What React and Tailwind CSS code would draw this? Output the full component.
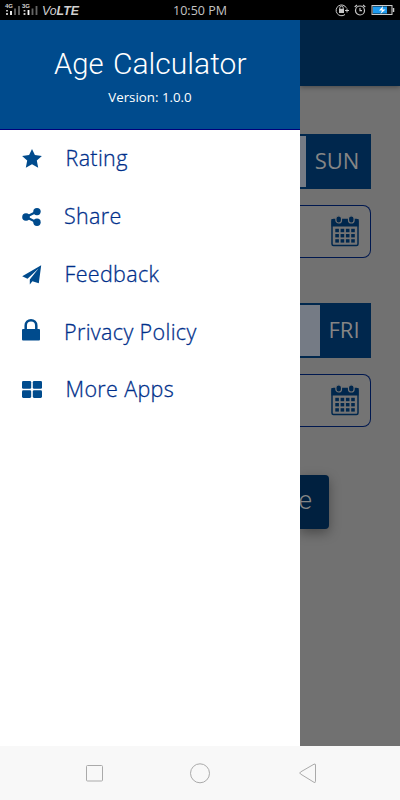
import React from 'react';

const StarIcon = () => (
  <svg width="20" height="19" viewBox="0 0 20 19" fill="#004b8d">
    <path d="M10 0 12.900 6l7 .9-5.100 4.600L16.200 18.700l-6.200-3.400-6.200 3.400 1.400-7.200L.1 6.900 7.100 6Z" />
  </svg>
);

const ShareIcon = () => (
  <svg width="20" height="20" viewBox="0 0 20 20" fill="#004b8d">
    <path d="M15 4.500 4 10l11 5.500" fill="none" stroke="#004b8d" strokeWidth="2.200" />
    <circle cx="4" cy="10" r="3.800" />
    <circle cx="15" cy="4.600" r="3.700" />
    <circle cx="15" cy="15.300" r="3.700" />
  </svg>
);

const PlaneIcon = () => (
  <svg className="relative top-px" width="20" height="20" viewBox="0 0 20 20" fill="#004b8d">
    <path d="M19.200.3.2 11.200l5.300 2.600L16.500 3.500 7.800 14.500v5l2.600-3.300 6.400 2Z" />
  </svg>
);

const LockIcon = () => (
  <svg className="relative -top-[2px]" width="20" height="24" viewBox="0 0 20 24" fill="none">
    <path d="M3.700 12V7.500a5.300 5.300 0 0 1 10.600 0V12" stroke="#004b8d" strokeWidth="2.500" />
    <rect x="0" y="11" width="18" height="11.500" rx="1" fill="#004b8d" />
  </svg>
);

const GridIcon = () => (
  <svg width="20" height="17" viewBox="0 0 20 17" fill="#004b8d">
    <rect x="0" y="0" width="9.2" height="7.7" rx="1.3" />
    <rect x="10.8" y="0" width="9.2" height="7.7" rx="1.3" />
    <rect x="0" y="9.2" width="9.2" height="7.7" rx="1.3" />
    <rect x="10.8" y="9.2" width="9.2" height="7.7" rx="1.3" />
  </svg>
);

const CalendarIcon = () => (
  <svg width="28" height="32" viewBox="0 0 28 32" fill="none">
    <rect x="1" y="4.5" width="26" height="26" rx="1.5" stroke="#00274d" strokeWidth="1.5" />
    <path d="M.5 4h27v7.500H.5z" fill="#00274d" />
    {[7.7, 20.3].map((x) => (
      <rect key={x} x={x - 2.8} y="0.8" width="5.6" height="7.2" rx="2.8" fill="#00274d" stroke="#747474" strokeWidth="1.2" />
    ))}
    {[13.8, 19, 24.2].map((y) =>
      [4.3, 9.6, 14.9, 20.2].map((x) => (
        <rect key={`${x}-${y}`} x={x} y={y} width="3.6" height="3.4" fill="#00274d" />
      ))
    )}
  </svg>
);

const menuItems = [
  { label: 'Rating', icon: <StarIcon />, offset: 'pl-[1.5px]' },
  { label: 'Share', icon: <ShareIcon />, offset: 'pl-0' },
  { label: 'Feedback', icon: <PlaneIcon />, offset: 'pl-[0.5px]' },
  { label: 'Privacy Policy', icon: <LockIcon />, offset: 'pl-0' },
  { label: 'More Apps', icon: <GridIcon />, offset: 'pl-[1.5px]' },
];

const StatusBar = () => (
  <div className="flex h-5 shrink-0 items-center justify-between bg-black pl-1 pr-[5px]">
    <div className="flex w-[150px] items-center">
      <svg className="shrink-0" width="38" height="16" viewBox="0 0 38 16">
        <g fill="#d6d6d6" fontFamily="Liberation Sans, sans-serif" fontSize="6" fontWeight="bold">
          <text x="1" y="6">4G</text>
          <text x="18" y="6">3G</text>
        </g>
        <path d="M3 8v1.500M3 11v2M20.500 8v1.500M20.500 11v2" stroke="#ccc" strokeWidth="1.8" />
        <path d="M7 9v4M24.500 8v5" stroke="#fff" strokeWidth="1.8" />
        <path d="M11 6.500V13M15 4V13M28.500 6.500V13M32.500 4V13" stroke="#666" strokeWidth="1.8" />
      </svg>
      <span className="pt-px font-['Liberation_Sans',sans-serif] text-[12.3px] italic leading-4 text-[#d0d0d0]">
        Vo<b>LTE</b>
      </span>
    </div>
    <svg width="56" height="18" viewBox="0 0 56 18">
      <text x="1" y="14" textLength="54" lengthAdjust="spacing" fill="#c4c4c4" fontFamily="Open Sans, sans-serif" fontSize="12.5">10:50 PM</text>
    </svg>
    <div className="flex w-[150px] items-center justify-end gap-[5px]">
      <svg width="14" height="14" viewBox="0 0 14 14" fill="none" stroke="#c8c8c8">
        <path d="M11.300 4.800A5.4 5.4 0 1 0 10 11.500M10 7.500h4M12 5.500v4" />
        <path d="M4.800 6V4.800a1.700 1.700 0 0 1 3.400 0V6" />
        <rect x="4" y="5.800" width="5" height="4.200" fill="#c8c8c8" stroke="none" />
      </svg>
      <svg width="12" height="14" viewBox="0 0 12 14" fill="none" stroke="#c8c8c8" strokeWidth="1.2">
        <circle cx="6" cy="7.500" r="4.500" />
        <path d="M6 5v2.700h2M.7 4 3 2M11.300 4 9 2" />
      </svg>
      <svg width="24" height="12" viewBox="0 0 24 12">
        <rect x="1" y="1.5" width="20" height="9" fill="#111" stroke="#ccc" />
        <rect x="2" y="2.5" width="14" height="7" fill="#1e9bf0" />
        <path d="M22.5 4v4" stroke="#ccc" strokeWidth="1.5" />
        <path d="M12 2 8 6.5h3L9.5 10 14.5 5.5h-3z" fill="#fff" />
      </svg>
    </div>
  </div>
);

const Drawer = () => (
  <aside className="flex w-[300px] shrink-0 flex-col bg-white">
    <header className="flex h-[110px] flex-col items-center border-b border-[#00007b] bg-[#004b8d] text-white">
      <svg className="mt-[23px]" width="200" height="42" viewBox="0 0 200 42" fill="#fff">
        <g fontFamily="Roboto, sans-serif" fontSize="29.5" fontWeight="300">
          <text x="4" y="31" textLength="49.5" lengthAdjust="spacingAndGlyphs">Age</text>
          <text x="63" y="31" textLength="133.5" lengthAdjust="spacingAndGlyphs">Calculator</text>
        </g>
      </svg>
      <p className="mt-[3px] font-['Open_Sans',sans-serif] text-[13.3px] leading-[18px]">Version: 1.0.0</p>
    </header>
    <nav className="flex flex-col">
      {menuItems.map(({ label, icon, offset }) => (
        <div key={label} className="flex h-[57.75px] items-center pl-[22px]">
          <div className="flex w-[42px] shrink-0 items-center">{icon}</div>
          <span className={`whitespace-nowrap pb-px font-['Open_Sans',sans-serif] text-[21.5px] font-light tracking-[0.35px] text-[#002f8a] [-webkit-text-stroke:0.3px] ${offset}`}>
            {label}
          </span>
        </div>
      ))}
    </nav>
  </aside>
);

const DayField = ({ day, box }) => (
  <div className="mr-[29px] flex h-[55px] border-y-2 border-[#00274d] bg-[#757b85]">
    <div className={`shrink-0 ${box}`} />
    <div className="flex flex-1 items-center justify-center bg-[#00274d] pb-px pr-[3px] font-['Open_Sans',sans-serif] text-[22px] text-[#858585]">
      {day}
    </div>
  </div>
);

const DateField = () => (
  <div className="mr-[29px] mt-4 flex h-[53px] items-center justify-end rounded-r-lg border border-l-0 border-[#00184f] bg-[#747474] pr-[11px]">
    <CalendarIcon />
  </div>
);

// Visible strip of the main screen, dimmed while the drawer is open
const DimmedPage = () => (
  <main className="flex flex-1 flex-col overflow-hidden bg-[#717171]">
    <div className="h-[66px] shrink-0 bg-[#002547] shadow-[0_1px_5px_rgba(0,0,0,0.4)]" />
    <div className="mt-[47.5px]">
      <DayField day="SUN" box="w-[6px]" />
      <DateField />
    </div>
    <div className="mt-[45px]">
      <DayField day="FRI" box="w-[20px]" />
      <DateField />
    </div>
    <div className="mt-[48.5px] flex h-[54px] w-[29px] shrink-0 items-center rounded-r bg-[#00203f] shadow-[0_4px_12px_rgba(0,0,0,0.35)]">
      <span className="-ml-[1.5px] pb-1 font-['Roboto',sans-serif] text-[26px] font-light leading-8 text-[#858585]">e</span>
    </div>
  </main>
);

const NavigationBar = () => (
  <div className="flex h-[54px] shrink-0 items-center bg-[#f8f8f8] pl-[85px]">
    <svg width="20" height="20" viewBox="0 0 20 20" fill="none" stroke="#aaa">
      <rect x="1.5" y="2.5" width="16" height="15.500" rx="1" />
    </svg>
    <svg className="ml-[84px]" width="22" height="22" viewBox="0 0 22 22" fill="none" stroke="#aaa">
      <circle cx="11" cy="11.300" r="9.500" />
    </svg>
    <svg className="ml-[87px]" width="20" height="22" viewBox="0 0 20 22" fill="none" stroke="#aaa">
      <path d="M17.500 3v16.500q0 1.500-1.500.8L2.500 12q-1.500-1 0-2L16 2.200q1.500-.7 1.500.8Z" />
    </svg>
  </div>
);

const App = () => {
  return (
    <div className="flex h-[800px] w-[400px] flex-col overflow-hidden">
      <StatusBar />
      <div className="flex h-[726px] shrink-0">
        <Drawer />
        <DimmedPage />
      </div>
      <NavigationBar />
    </div>
  );
};

export default App;
